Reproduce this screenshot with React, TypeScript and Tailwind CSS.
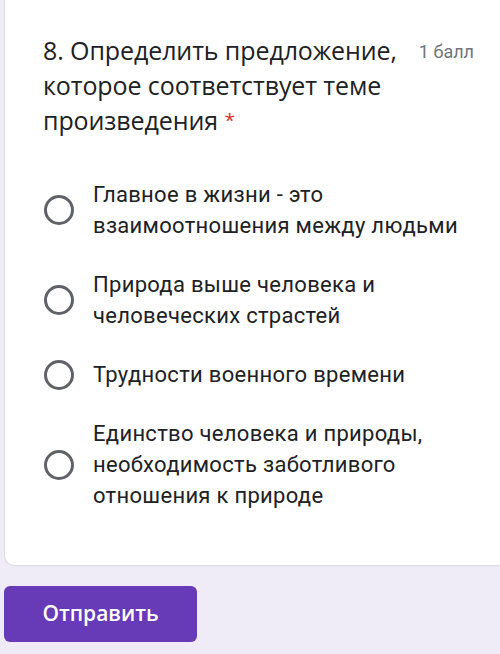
import React from "react";

const options = [
  ["Главное в жизни - это", "взаимоотношения между людьми"],
  ["Природа выше человека и", "человеческих страстей"],
  ["Трудности военного времени"],
  ["Единство человека и природы,", "необходимость заботливого", "отношения к природе"],
];

const Radio: React.FC = () => (
  <div className="w-[30px] h-[30px] rounded-full border-[3px] border-[#5f6368] shrink-0" />
);

export default function App() {
  return (
    <div className="w-[500px] h-[654px] bg-[#efebf7] overflow-hidden pl-[4px]">
      <div className="bg-white border-l border-b border-[#dadce0] rounded-bl-[10px] h-[566px] pt-[33px] pl-[38px] pr-[10px]">
        <div className="flex items-start justify-between">
          <div
            className="text-[25px] leading-[35px] text-[#202124] tracking-[-0.1px]"
            style={{ fontFamily: "'Open Sans', sans-serif" }}
          >
            8. Определить предложение,
            <br />
            которое соответствует теме
            <br />
            произведения{" "}
            <span className="text-[#d93025] text-[19px] align-top">*</span>
          </div>
          <div
            className="text-[18px] leading-[35px] text-[#70757a] pr-[16px] pt-[1px]"
            style={{ fontFamily: "Roboto, sans-serif" }}
          >
            1 балл
          </div>
        </div>
        <div className="flex flex-col gap-[28px] mt-[41px]">
          {options.map((lines, i) => (
            <div key={i} className="flex items-center gap-[19px] pl-[1px]">
              <Radio />
              <div
                className="text-[22px] leading-[31px] tracking-[0.3px] text-[#202124]"
                style={{ fontFamily: "Roboto, sans-serif" }}
              >
                {lines.map((l, j) => (
                  <div key={j}>{l}</div>
                ))}
              </div>
            </div>
          ))}
        </div>
      </div>
      <div className="mt-[20px]">
        <button
          className="w-[193px] h-[56px] rounded-[6px] bg-[#673ab7] text-white text-[21px] font-semibold"
          style={{ fontFamily: "'Open Sans', sans-serif" }}
        >
          Отправить
        </button>
      </div>
    </div>
  );
}
